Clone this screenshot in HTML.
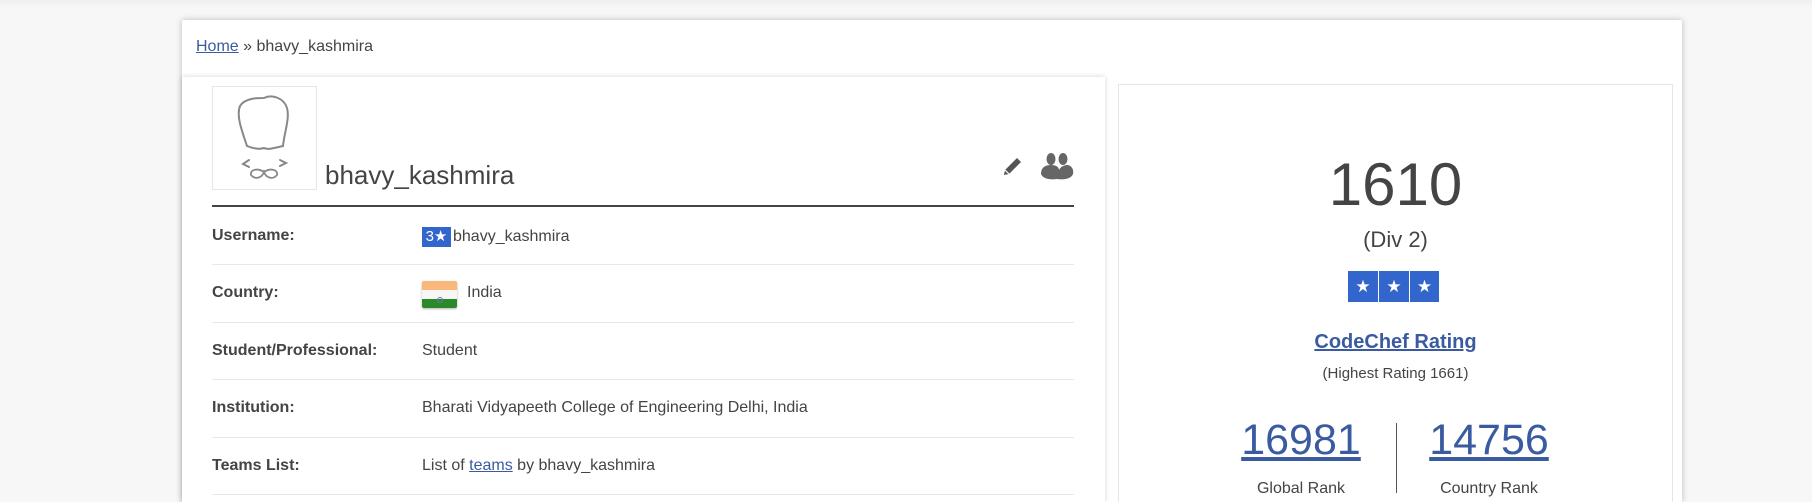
<!DOCTYPE html>
<html><head><meta charset="utf-8"><style>
*{margin:0;padding:0;box-sizing:border-box}
html,body{width:1812px;height:502px;overflow:hidden}
body{background:#f7f7f7;font-family:"Liberation Sans",Arial,sans-serif;color:#444;position:relative}
.abs{position:absolute}
#card{left:182px;top:20px;width:1500px;height:482px;background:#fff;box-shadow:0 0 6px rgba(0,0,0,.25)}
a{color:#3a5ba0}
.lbl{position:absolute;left:212px;font-weight:bold;font-size:16px;color:#444}
.val{position:absolute;left:422px;font-size:16px;color:#444}
.sep{position:absolute;left:212px;width:862px;height:1px;background:#e8e8e8}
</style></head><body>
<div class="abs" style="left:0;top:0;width:1812px;height:8px;background:linear-gradient(#eee,#f7f7f7)"></div>
<div id="card" class="abs"></div>
<div class="abs" style="left:196px;top:38px;font-size:16px"><a href="#" style="color:#3a5ba0">Home</a> » bhavy_kashmira</div>
<div class="abs" style="left:182px;top:77px;width:923px;height:425px;background:#fff;box-shadow:0 0 5px rgba(0,0,0,.18)"></div>
<div class="abs" style="left:212px;top:86px;width:105px;height:104px;border:1px solid #e6e6e6;background:#fff"></div>
<svg class="abs" style="left:212px;top:86px" width="105" height="104" viewBox="0 0 105 104" fill="none" stroke="#888" stroke-width="2" stroke-linecap="round">
<path d="M35 60 C30 45 24 30 28 20 C33 12 45 12 52 12 C60 8 72 12 75 22 C78 32 72 48 71 60 C62 62 56 64 52 62 C46 64 40 62 35 60Z"/>
<path d="M37 74 L31 78 L37 81"/><path d="M68 74 L74 77 L68 80"/>
<path d="M52 86 C46 82 38 83 39 89 C43 94 50 92 52 86 C54 92 61 94 65 89 C66 83 58 82 52 86Z" stroke-width="1.8"/>
</svg>
<div class="abs" style="left:325px;top:160px;font-size:26px;color:#444">bhavy_kashmira</div>
<svg class="abs" style="left:1000px;top:154px" width="24" height="24" viewBox="0 0 24 24"><path d="M4 21 L5 16 L17 4 L21 8 L9 20 Z" fill="#555"/><path d="M5 16 L9 20" stroke="#fff" stroke-width="1.2"/></svg>
<svg class="abs" style="left:1040px;top:152px" width="34" height="28" viewBox="0 0 34 28"><g fill="#666"><ellipse cx="11" cy="7" rx="4.5" ry="6"/><ellipse cx="23" cy="7" rx="4.5" ry="6"/><path d="M1 22 C1 15 6 13 11 13 C16 13 19 15 19 18 C21 14 25 13 28 13 C32 14 34 18 33 22 C31 27 24 28 17 27 C10 28 3 27 1 22Z"/></g></svg>
<div class="abs" style="left:212px;top:205px;width:862px;height:2px;background:#444"></div>
<div class="lbl" style="top:227px">Username:</div>
<div class="val" style="top:227px"><span style="display:inline-block;background:#3366cc;color:#fff;font-size:15px;width:29px;height:20px;line-height:20px;text-align:center;margin-right:2px">3★</span>bhavy_kashmira</div>
<div class="sep" style="top:264px"></div>
<div class="lbl" style="top:284px">Country:</div>
<div class="abs" style="left:422px;top:281px;width:35px;height:27px;border-radius:2px;overflow:hidden;box-shadow:0 1px 2px rgba(0,0,0,.3)"><div style="height:9px;background:#f9b77a"></div><div style="height:9px;background:#f6f6f6;text-align:center"><span style="display:inline-block;width:6px;height:6px;border:1px solid #6677bb;border-radius:50%;margin-top:1px"></span></div><div style="height:9px;background:#2a8a2a"></div></div>
<div class="val" style="left:467px;top:284px">India</div>
<div class="sep" style="top:322px"></div>
<div class="lbl" style="top:342px">Student/Professional:</div>
<div class="val" style="top:342px">Student</div>
<div class="sep" style="top:379px"></div>
<div class="lbl" style="top:399px">Institution:</div>
<div class="val" style="top:399px">Bharati Vidyapeeth College of Engineering Delhi, India</div>
<div class="sep" style="top:437px"></div>
<div class="lbl" style="top:457px">Teams List:</div>
<div class="val" style="top:457px">List of <a href="#">teams</a> by bhavy_kashmira</div>
<div class="sep" style="top:494px"></div>
<div class="abs" style="left:1118px;top:84px;width:555px;height:418px;border:1px solid #e6e6e6;border-bottom:none;background:#fff"></div>
<div class="abs" style="left:1118px;top:150px;width:555px;text-align:center;font-size:60px;line-height:70px;color:#444">1610</div>
<div class="abs" style="left:1118px;top:227px;width:555px;text-align:center;font-size:22px;color:#444">(Div 2)</div>
<div class="abs" style="left:1348px;top:271px;display:flex;gap:1px">
<span style="width:30px;height:31px;background:#3366cc;color:#fff;text-align:center;line-height:31px;font-size:17px">★</span><span style="width:30px;height:31px;background:#3366cc;color:#fff;text-align:center;line-height:31px;font-size:17px">★</span><span style="width:29px;height:31px;background:#3366cc;color:#fff;text-align:center;line-height:31px;font-size:17px">★</span></div>
<div class="abs" style="left:1118px;top:331px;width:555px;text-align:center;font-size:20px;font-weight:bold"><a href="#">CodeChef Rating</a></div>
<div class="abs" style="left:1118px;top:365px;width:555px;text-align:center;font-size:15px;color:#444">(Highest Rating 1661)</div>
<div class="abs" style="left:1201px;top:416px;width:200px;text-align:center;font-size:43px"><a href="#">16981</a></div>
<div class="abs" style="left:1389px;top:416px;width:200px;text-align:center;font-size:43px"><a href="#">14756</a></div>
<div class="abs" style="left:1396px;top:423px;width:1px;height:70px;background:#555"></div>
<div class="abs" style="left:1201px;top:480px;width:200px;text-align:center;font-size:16px;line-height:18px">Global Rank</div>
<div class="abs" style="left:1389px;top:480px;width:200px;text-align:center;font-size:16px;line-height:18px">Country Rank</div>
</body></html>
